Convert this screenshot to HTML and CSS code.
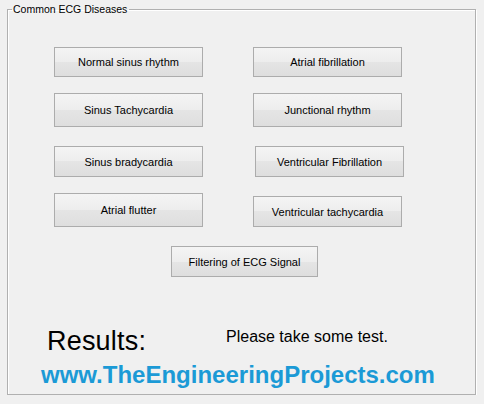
FILE: index.html
```html
<!DOCTYPE html>
<html lang="en">
<head>
    <meta charset="UTF-8">
    <meta name="viewport" content="width=device-width, initial-scale=1.0">
    <title>ECG Diseases</title>
    <link rel="stylesheet" href="styles.css">
</head>
<body>
    <fieldset class="panel">
        <legend>Common ECG Diseases</legend>

        <div class="btn-rows">
            <div class="btn-row">
                <button>Normal sinus rhythm</button>
                <button>Atrial fibrillation</button>
            </div>
            <div class="btn-row row-tall">
                <button>Sinus Tachycardia</button>
                <button>Junctional rhythm</button>
            </div>
            <div class="btn-row row-mid">
                <button>Sinus bradycardia</button>
                <button class="nudge">Ventricular Fibrillation</button>
            </div>
            <div class="btn-row row-tall">
                <button>Atrial flutter</button>
                <button class="short">Ventricular tachycardia</button>
            </div>
            <div class="btn-row row-mid filter-row">
                <button>Filtering of ECG Signal</button>
            </div>
        </div>

        <div class="results">
            <span class="results-label">Results:</span>
            <span class="results-text">Please take some test.</span>
        </div>

        <div class="site">www.TheEngineeringProjects.com</div>
    </fieldset>
</body>
</html>
```

FILE: styles.css
```css
body {
    margin: 0;
    background-color: #f0f0f0;
    font-family: "Liberation Sans", Arial, sans-serif;
    color: #000;
}

.panel {
    box-sizing: border-box;
    width: 469px;
    height: 393px;
    margin: 2px 0 0 7px;
    padding: 0;
    border: 1px solid #b0b0b0;
    box-shadow: 1px 1px 0 #fff, inset 1px 1px 0 #fff;
    min-inline-size: 0;
}

.panel legend {
    margin-left: 4px;
    padding: 0 2px 0 1px;
    font-size: 10.5px;
    line-height: 14px;
}

.btn-rows {
    margin-top: 31px;
    padding-left: 46px;
}

.btn-row {
    display: flex;
    gap: 50px;
    height: 30px;
    margin-bottom: 16px;
}

.row-tall {
    height: 34px;
    margin-bottom: 19px;
}

.row-mid {
    height: 31px;
}

.btn-row button {
    box-sizing: border-box;
    width: 149px;
    height: 100%;
    padding: 0;
    border: 1px solid #acacac;
    border-radius: 0;
    background: linear-gradient(#f4f4f4, #ededed 50%, #e5e5e5 50%, #dedede);
    font-family: "Liberation Sans", Arial, sans-serif;
    font-size: 11px;
    color: #000;
}

.btn-row .nudge {
    margin-left: 2px;
}

.btn-row .short {
    height: 31px;
    align-self: flex-end;
}

.filter-row {
    padding-left: 117px;
    margin-bottom: 0;
}

.filter-row button {
    width: 147px;
}

.results {
    display: flex;
    align-items: flex-start;
    margin-top: 51px;
    padding-left: 39px;
}

.results-label {
    width: 179px;
    font-size: 27px;
    line-height: 27px;
    letter-spacing: 0.2px;
}

.results-text {
    margin-top: 1px;
    font-size: 16px;
    line-height: 16px;
}

.site {
    margin-top: 8px;
    padding-left: 33px;
    font-size: 24px;
    line-height: 24px;
    font-weight: bold;
    color: #1b9ad6;
}
```
